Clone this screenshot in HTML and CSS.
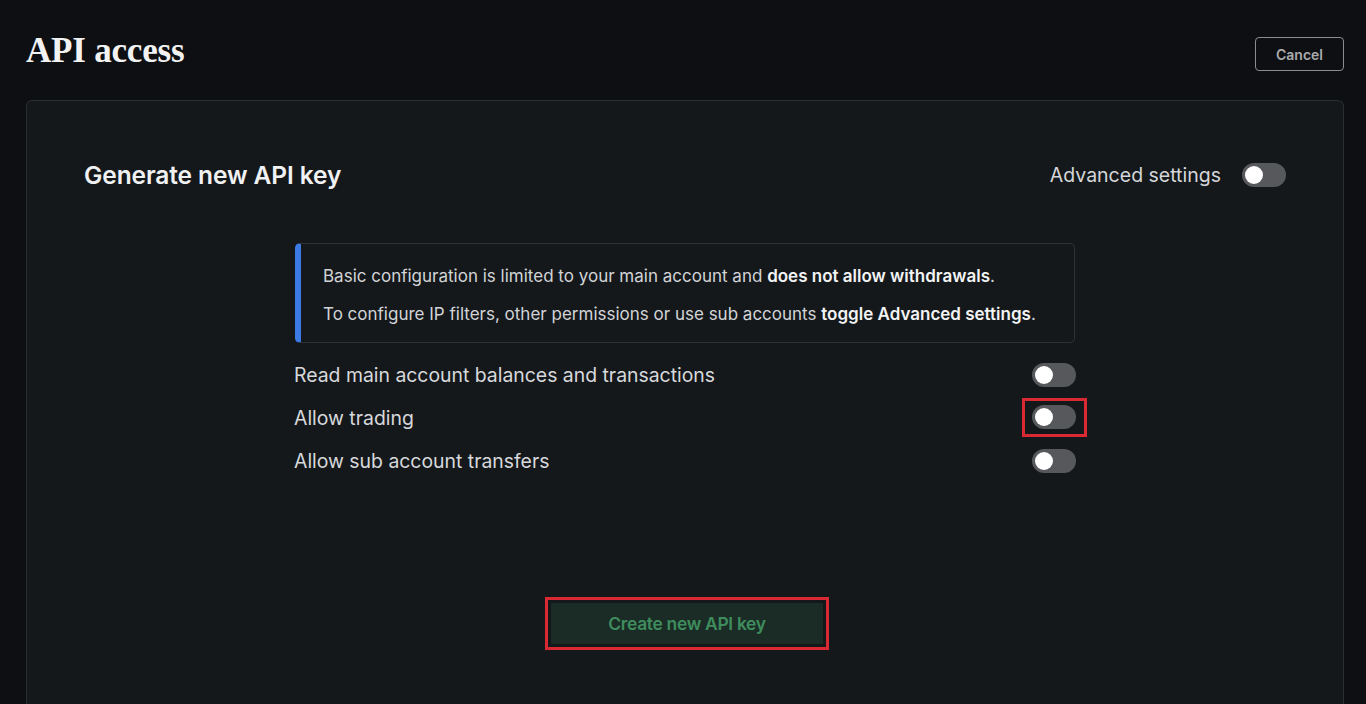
FILE: index.html
```html
<!DOCTYPE html>
<html>
<head>
<meta charset="utf-8">
<link rel="stylesheet" href="styles.css">
</head>
<body>
<div class="page">
  <header class="top">
    <h1 class="title">API access</h1>
    <button class="cancel">Cancel</button>
  </header>
  <section class="card">
    <div class="card-head">
      <h2 class="card-title">Generate new API key</h2>
      <div class="adv">
        <span class="adv-label">Advanced settings</span>
        <span class="toggle"><span class="knob"></span></span>
      </div>
    </div>
    <div class="body">
      <div class="info">
        <p>Basic configuration is limited to your main account and <b>does not allow withdrawals</b>.</p>
        <p>To configure IP filters, other permissions or use sub accounts <b>toggle Advanced settings</b>.</p>
      </div>
      <div class="row">
        <span class="row-label">Read main account balances and transactions</span>
        <span class="toggle"><span class="knob"></span></span>
      </div>
      <div class="row">
        <span class="row-label">Allow trading</span>
        <span class="hl"><span class="toggle"><span class="knob"></span></span></span>
      </div>
      <div class="row">
        <span class="row-label">Allow sub account transfers</span>
        <span class="toggle"><span class="knob"></span></span>
      </div>
      <div class="actions">
        <div class="hl-btn"><button class="create">Create new API key</button></div>
      </div>
    </div>
  </section>
</div>
</body>
</html>
```
FILE: styles.css
```css
* { box-sizing: border-box; }
html, body { margin: 0; padding: 0; }
body {
  background: #0d0f12;
  width: 1366px;
  height: 704px;
  overflow: hidden;
  font-family: Inter, "Noto Sans", sans-serif;
  color: #e6e7e9;
}
.page { padding: 0 22px 0 26px; }
.top {
  display: flex;
  justify-content: space-between;
  align-items: flex-start;
  height: 100px;
}
.title {
  margin: 31px 0 0 0;
  font-family: "Liberation Serif", serif;
  font-weight: bold;
  font-size: 35px;
  line-height: 40px;
  color: #f2f2f2;
  letter-spacing: -0.2px;
}
.cancel {
  margin-top: 37px;
  width: 89px;
  height: 34px;
  background: transparent;
  border: 1.5px solid #8a8c90;
  border-radius: 4px;
  color: #a9abae;
  font-family: Inter, sans-serif;
  font-weight: 600;
  font-size: 14px;
  padding: 0;
}
.card {
  background: #15181b;
  border: 1px solid #2a2d31;
  border-bottom: none;
  border-radius: 6px 6px 0 0;
  height: 604px;
  padding: 0 57px 0 57px;
}
.card-head {
  display: flex;
  justify-content: space-between;
  align-items: center;
  margin-top: 58px;
  height: 32px;
}
.card-title {
  margin: 0;
  font-size: 24.5px;
  font-weight: 600;
  color: #f0f1f2;
  letter-spacing: -0.1px;
}
.adv { display: flex; align-items: center; gap: 21px; }
.adv-label { font-size: 19.5px; color: #d4d6d9; font-weight: 400; }
.toggle {
  display: inline-flex;
  align-items: center;
  width: 44px;
  height: 24px;
  border-radius: 12px;
  background: #56585c;
  padding: 0 3px;
}
.knob {
  width: 18px;
  height: 18px;
  border-radius: 50%;
  background: #ffffff;
}
.body {
  width: 782px;
  margin: 52px auto 0 auto;
  padding-left: 0;
}
.info {
  border: 1px solid #2e3135;
  border-left: 6px solid #3c7be6;
  border-radius: 5px;
  padding: 21px 20px 10px 22px;
  height: 100px;
  font-size: 17px;
  color: #d2d4d7;
  margin-left: 1px;
  margin-right: 1px;
}
.info p { margin: 0 0 16px 0; line-height: 22px; }
.info b { color: #f2f3f4; font-weight: 600; }
.row {
  display: flex;
  justify-content: space-between;
  align-items: center;
  height: 43px;
}
.info + .row { margin-top: 10px; }
.row-label { font-size: 19.4px; color: #d7d9dc; }
.hl {
  display: inline-flex;
  border: 3px solid #d92a33;
  padding: 4px 8px 5px 7px;
  margin-right: -11px;
}
.actions {
  display: flex;
  justify-content: center;
  margin-top: 115px;
}
.hl-btn {
  border: 3px solid #d92a33;
  padding: 3px;
  margin-left: 4px;
}
.create {
  display: block;
  width: 272px;
  height: 41px;
  background: #1a2c25;
  border: none;
  color: #3f8d5e;
  font-family: Inter, sans-serif;
  font-size: 17.4px;
  font-weight: 600;
  letter-spacing: -0.3px;
}
```
